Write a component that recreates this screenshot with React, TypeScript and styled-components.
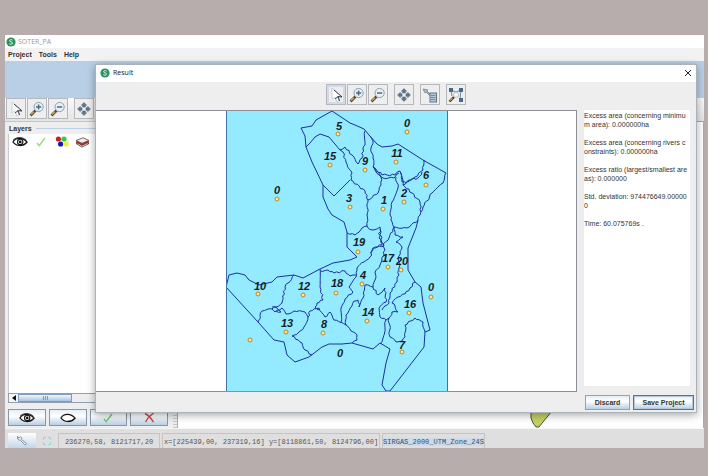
import React from "react";
import styled, { createGlobalStyle, css } from "styled-components";

const GlobalStyle = createGlobalStyle`
  * { box-sizing: border-box; }
  body {
    margin: 0;
    background: #b8adad;
    font-family: "Liberation Sans", Arial, sans-serif;
    font-size: 8px;
    color: #333;
  }
  button, textarea { font-family: inherit; font-size: inherit; color: inherit; }
`;

const steel = css`
  border: 1px solid #8797a8;
  background: linear-gradient(#e4edf6, #ffffff 40%, #b8cfe5);
`;

const Desktop = styled.div`
  display: flex;
  min-height: 100vh;
  padding: 35px 4px 28px 5px;
`;

const AppWindow = styled.div`
  position: relative;
  flex: 1;
  min-width: 0;
  display: flex;
  flex-direction: column;
  background: #eeeeee;
`;

const TitleBar = styled.header<{ $tall?: boolean }>`
  display: flex;
  align-items: center;
  gap: ${(p) => (p.$tall ? 3 : 2)}px;
  height: ${(p) => (p.$tall ? 17 : 13)}px;
  padding: ${(p) => (p.$tall ? "0 4px 2px" : "0 4px 0 1px")};
  background: #fff;
  color: ${(p) => (p.$tall ? "#111" : "#999")};
`;

const Title = styled.h1`
  flex: 1;
  margin: 0;
  font: 7px/10px "Open Sans", "Noto Sans", sans-serif;
`;

const CloseButton = styled.button`
  display: grid;
  place-items: center;
  padding: 0;
  border: 0;
  background: none;
`;

const MenuBar = styled.nav`
  display: flex;
  align-items: center;
  gap: 7px;
  height: 13px;
  padding: 0 3px;
  background: #f2f2f2;
`;

const MenuButton = styled.button`
  padding: 0;
  border: 0;
  background: none;
  font-weight: bold;
  font-size: 7px;
  line-height: 10px;
`;

const BlueStrip = styled.div`
  height: 37px;
  background: #b8cfe5;
`;

const ToolBar = styled.div<{ $center?: boolean }>`
  display: flex;
  align-items: flex-start;
  justify-content: ${(p) => (p.$center ? "center" : "flex-start")};
  gap: 6px;
  height: ${(p) => (p.$center ? 28 : 23)}px;
  padding: ${(p) => (p.$center ? "2px 0 0" : "0 1px")};
  background: ${(p) => (p.$center ? "#eeeeee" : "linear-gradient(#fafafa, #e4e4e4)")};
`;

const ToolGroup = styled.div`
  display: flex;
  gap: 1px;
`;

const ToolButton = styled.button<{ $active?: boolean }>`
  display: grid;
  place-items: center;
  width: 20px;
  height: 21px;
  padding: 0;
  border: 1px solid #b4b8bc;
  background: #eeeeee;
  box-shadow: ${(p) => (p.$active ? "inset 0 0 0 2px #cfdbe7" : "none")};
`;

const Body = styled.main`
  flex: 1;
  display: flex;
  min-height: 0;
`;

const LayerPanel = styled.section`
  display: flex;
  flex-direction: column;
  width: 168px;
  padding: 1px 5px 2px 3px;
  border-top: 1px solid #c4c4c4;
`;

const LayerHeading = styled.h2`
  display: flex;
  align-items: center;
  gap: 4px;
  margin: 0;
  padding-left: 1px;
  font-size: 7px;
  line-height: 11px;
  &::after { content: ""; flex: 1; border-top: 1px solid #b8cfe5; }
`;

const LayerList = styled.div`
  flex: 1;
  padding: 2px 0;
  background: #fff;
  border-left: 1px solid #c8ccd0;
`;

const LayerRow = styled.div`
  display: grid;
  grid-template-columns: repeat(4, 21px);
  place-items: center;
  width: 84px;
  height: 12px;
`;

const ScrollBar = styled.div`
  display: flex;
  height: 10px;
  border: 1px solid #8fa0b2;
  background: #eeeeee;
`;

const ScrollArrow = styled.button`
  display: grid;
  place-items: center;
  width: 9px;
  padding: 0;
  border: 0;
  background: #f6f6f6;
`;

const ScrollThumb = styled.div`
  display: grid;
  place-items: center;
  width: 54px;
  border: 1px solid #7a9cc0;
  background: linear-gradient(#f2f7fc, #a9c4e0);
`;

const LayerActions = styled.div`
  display: flex;
  gap: 3px;
  padding-top: 6px;
`;

const ActionButton = styled.button`
  ${steel}
  display: grid;
  place-items: center;
  flex: 1;
  height: 17px;
  padding: 0;
`;

const Splitter = styled.div`
  width: 4px;
  background: repeating-linear-gradient(#c6c6c6 0 1px, #eeeeee 1px 3px);
`;

const Canvas = styled.section`
  flex: 1;
  display: flex;
  flex-direction: column;
  justify-content: flex-end;
  align-items: flex-end;
  padding-right: 150px;
  border: 1px solid #aaa;
  border-bottom: 0;
  background: #fff;
`;

const StatusBar = styled.footer`
  display: flex;
  align-items: stretch;
  gap: 2px;
  height: 20px;
  padding: 4px 3px 0;
  border-top: 1px solid #f6f6f6;
  background: #dfdfdf;
  color: #555;
  font-family: "Liberation Mono", monospace;
  font-size: 7px;
  white-space: nowrap;
`;

const StatusTool = styled.button`
  display: grid;
  place-items: center;
  width: 28px;
  padding: 0;
  border: 0;
  background: linear-gradient(#ffffff, #c3d6e8);
`;

const StatusIcon = styled.span`
  display: grid;
  place-items: center;
  width: 18px;
`;

const StatusCell = styled.output<{ $width: number }>`
  display: flex;
  align-items: center;
  justify-content: center;
  width: ${(p) => p.$width}px;
  padding-top: 2px;
  border: 1px solid #c4c4c4;
  border-bottom: 0;
`;

const Projection = styled.span`
  background: #ccdaea;
  color: #3b4d66;
`;

const Dialog = styled.section`
  position: absolute;
  inset: 29px 7px 35px 90px;
  display: flex;
  flex-direction: column;
  border: 1px solid #aab2ba;
  background: #eeeeee;
  box-shadow: 0 2px 8px rgba(0, 0, 0, 0.35);
`;

const ResultArea = styled.div`
  flex: 1;
  min-height: 0;
  display: flex;
  gap: 7px;
  padding-right: 6px;
`;

const MapPane = styled.div`
  flex: 1;
  min-width: 0;
  display: flex;
  justify-content: center;
  padding-left: 1px;
  border: 1px solid #8c9096;
  border-left: 0;
  background: #fff;
`;

const MapSvg = styled.svg`
  display: block;
  height: 100%;
  max-width: 100%;
`;

const Report = styled.textarea`
  display: block;
  width: 106px;
  margin-bottom: 6px;
  padding: 1px 0 0;
  border: 0;
  outline: 0;
  resize: none;
  overflow: hidden;
  background: #fff;
  font-size: 7px;
  line-height: 9px;
  white-space: pre;
`;

const DialogActions = styled.div`
  display: flex;
  justify-content: flex-end;
  gap: 3px;
  height: 20px;
  padding: 3px 2px 2px;
`;

const DialogButton = styled.button<{ $primary?: boolean }>`
  ${steel}
  width: ${(p) => (p.$primary ? 61 : 45)}px;
  padding: 0;
  border-color: ${(p) => (p.$primary ? "#5f7388" : "#93a3b4")};
  box-shadow: ${(p) => (p.$primary ? "inset 0 0 0 1px #b4c8dc" : "none")};
  font-weight: bold;
  font-size: 7px;
  line-height: 10px;
`;

const Logo = () => (
  <svg width="10" height="10" viewBox="0 0 10 10" aria-hidden="true">
    <circle cx="5" cy="5" r="4.6" fill="#2f9160" />
    <path d="M6.6 3.2C5.6 2.2 3.5 2.6 3.6 3.9C3.7 5.1 6.5 4.6 6.5 6.1C6.5 7.5 4.2 7.7 3.3 6.7" fill="none" stroke="#e8fff2" strokeWidth="0.9" />
  </svg>
);

const Pointer = () => (
  <svg width="16" height="16" viewBox="0 0 16 16" aria-hidden="true">
    <path d="M4 1L4 12L7 10L9 15L11 14L9.4 9.5L14 9.5Z" fill="#fff" stroke="#b9c2ca" strokeWidth="0.7" />
    <path d="M6 3L14 10L10 9.6L11.6 14M10 9.6L7 12" fill="none" stroke="#33404c" strokeWidth="1" />
  </svg>
);

const Magnifier = ({ plus }: { plus?: boolean }) => (
  <svg width="16" height="16" viewBox="0 0 16 16" aria-hidden="true">
    <path d="M1.5 14.5L6.5 9.5" stroke="#4b463c" strokeWidth="2.6" />
    <path d="M2 13.6L5 10.8" stroke="#d9a64e" strokeWidth="1.4" />
    <circle cx="9.6" cy="6" r="4.6" fill="#e8f0f6" stroke="#8d9fae" />
    <path d={plus ? "M7 6H12.2M9.6 3.4V8.6" : "M7 6H12.2"} stroke="#4a6b87" strokeWidth="1.5" />
  </svg>
);

const Move = () => (
  <svg width="14" height="14" viewBox="0 0 14 14" fill="#5f7c94" stroke="#38536a" strokeWidth="0.5" aria-hidden="true">
    <path d="M7 0.6L9.6 3.2H8.3V5H5.7V3.2H4.4ZM7 13.4L4.4 10.8H5.7V9H8.3V10.8H9.6ZM0.6 7L3.2 4.4V5.7H5V8.3H3.2V9.6ZM13.4 7L10.8 9.6V8.3H9V5.7H10.8V4.4Z" />
  </svg>
);

const SelectList = () => (
  <svg width="16" height="16" viewBox="0 0 16 16" aria-hidden="true">
    <path d="M1 2L6 3L5 4L8.5 7.5L7.5 8.5L4 5L3 6Z" fill="#aeb8c1" stroke="#76838e" strokeWidth="0.8" />
    <rect x="8" y="6" width="6.5" height="9" fill="#b9cad8" stroke="#5c7386" />
    <path d="M9 8.5H13.5M9 10.5H13.5M9 12.5H13.5" stroke="#5f788c" strokeWidth="0.8" />
  </svg>
);

const ZoomExtent = () => (
  <svg width="16" height="16" viewBox="0 0 16 16" aria-hidden="true">
    <path d="M3 3L8 5L13 3L12 12M3 3L4 9" fill="none" stroke="#71899d" />
    <g fill="#486a86"><rect x="1" y="1" width="4" height="4" /><rect x="11" y="1" width="4" height="4" /><rect x="11" y="11" width="4" height="4" /></g>
    <path d="M1.5 14.5L6 10" stroke="#3c352a" strokeWidth="2.4" />
    <path d="M2 13.6L4.5 11.2" stroke="#d49b45" strokeWidth="1.2" />
    <circle cx="8" cy="7.8" r="2.6" fill="#f4f6f8" stroke="#b6c1ca" />
  </svg>
);

const Eye = ({ open }: { open?: boolean }) => (
  <svg width="16" height="10" viewBox="0 0 16 10" aria-hidden="true">
    <path d="M1 5C3.5 0.3 11 0 15 5.2C11 9.8 4 9.4 1 5Z" fill="#fff" stroke="#151515" strokeWidth="1.3" />
    {open && (
      <>
        <circle cx="8.2" cy="4.9" r="2.7" fill="none" stroke="#151515" strokeWidth="1.1" />
        <circle cx="8.2" cy="4.9" r="1.4" fill="#151515" />
        <path d="M1 3.2C5-0.8 11 0 14.5 3.4" fill="none" stroke="#151515" strokeWidth="0.8" />
      </>
    )}
  </svg>
);

const Tick = ({ pale }: { pale?: boolean }) => (
  <svg width="10" height="10" viewBox="0 0 10 10" aria-hidden="true">
    <path d="M1 6L3.2 8.6L9 1" fill="none" stroke={pale ? "#94dc80" : "#69ce67"} strokeWidth="1.4" />
  </svg>
);

const Cross = () => (
  <svg width="11" height="11" viewBox="0 0 11 11" aria-hidden="true">
    <path d="M1 1.5C4 3 7.5 7 9.5 10M9.5 1C6 3.5 3 7 1.5 10" fill="none" stroke="#cc4740" strokeWidth="1.4" />
  </svg>
);

const Palette = () => (
  <svg width="14" height="12" viewBox="0 0 14 12" aria-hidden="true">
    <circle cx="3.4" cy="3" r="2.6" fill="#cc1d25" />
    <circle cx="9" cy="3" r="2.6" fill="#35cc3b" />
    <circle cx="5.6" cy="8" r="2.6" fill="#1116c8" />
    <circle cx="11.2" cy="8" r="2.6" fill="#f4ee35" />
  </svg>
);

const Stack = () => (
  <svg width="15" height="11" viewBox="0 0 15 11" strokeWidth="0.8" aria-hidden="true">
    <path d="M1 6.5L7 10L14 6.5L8 4Z" fill="#fff" stroke="#333" />
    <path d="M1 5L7 8.4L14 5L8 2.5Z" fill="#bd322b" stroke="#7a211c" />
    <path d="M1 3.5L7 6.3L14 3.5L8 0.8Z" fill="#f5eee8" stroke="#5c4440" />
  </svg>
);

const Wrench = () => (
  <svg width="12" height="11" viewBox="0 0 12 11" aria-hidden="true">
    <path d="M1.5 1.5L3 3.2L4.4 1.7C5.8 2.2 6 3.6 5.4 4.4L10.2 8.2C10.6 9.4 9.6 10 8.7 9.5L4.3 5.2C2.6 5.6 1.2 4 1.5 1.5Z" fill="#f5f7f9" stroke="#697682" strokeWidth="0.8" />
  </svg>
);

type Pt = [number, number];

const parse = (s: string): Pt[] => s.split(" ").map((p) => p.split(",").map(Number) as Pt);

const smoothLine = (s: string) => "M" + parse(s).map((p) => p.join(" ")).join("L");

/* Splits each segment into short steps with a repeatable sideways wobble, like a digitised river. */
const riverLine = (s: string) => {
  const pts = parse(s);
  const out: Pt[] = [pts[0]];
  for (let i = 1; i < pts.length; i++) {
    const [x0, y0] = pts[i - 1];
    const [x1, y1] = pts[i];
    const len = Math.hypot(x1 - x0, y1 - y0) || 1;
    const steps = Math.max(1, Math.round(len / 2.5));
    for (let k = 1; k < steps; k++) {
      const t = k / steps;
      const x = x0 + (x1 - x0) * t;
      const y = y0 + (y1 - y0) * t;
      const w = Math.sin(x * 12.9 + y * 78.2) * 0.9;
      out.push([x - ((y1 - y0) / len) * w, y + ((x1 - x0) / len) * w]);
    }
    out.push([x1, y1]);
  }
  return "M" + out.map(([x, y]) => `${x.toFixed(1)} ${y.toFixed(1)}`).join("L");
};

const borders = [
  "332,111 350,123 355,125 364,129 369,135 377,144 382,147 392,146 398,144 423,160 446,173",
  "332,111 316,120 312,126 301,128 305,136 306,147 312,162 323,185 323,197 328,209 332,215 344,222 347,232 347,247 357,257 350,260 333,263 320,269 303,278 294,275 277,277 272,282 259,285 249,280 245,275 237,273 229,275 226,287",
  "226,287 258,322 274,340 284,342 287,355 295,362 309,357 322,347 329,344 342,344 352,343 373,349 380,343 390,349 386,363 382,385 386,391 390,391 424,347 425,332 430,330 423,303 421,287 415,282 408,270 408,248 416,228 418,220",
  "306,147 310,143 315,137 320,134 329,137 340,150",
  "350,180 343,187 334,196 323,185",
];

const rivers = [
  "340,150 345,147 352,155 358,164 362,158 363,149 365,145 365,131",
  "340,150 343,152 346,162 352,173 351,180 365,191 368,200 378,193 381,185 381,177 373,167 373,158 371,148 373,141 369,135",
  "373,167 382,175 395,175 400,171 403,185 415,177 423,170 424,160",
  "374,168 383,178 394,178 399,173",
  "401,173 402,182 406,183 409,180 418,178 422,172",
  "368,200 367,215 367,226",
  "396,177 398,188 392,202 390,215 391,220 394,227 389,238 383,246",
  "403,185 412,193 420,202 421,212",
  "446,173 443,183 432,193 423,207 420,215 418,220 407,228 394,227",
  "347,233 355,235 362,228 367,226 372,230 380,227 382,245 373,248 370,257 364,262 357,268 356,277 349,287 353,292 345,299 341,308 341,322 346,325",
  "380,229 379,238 384,246 375,247 371,253",
  "320,271 328,270 334,273 345,271 350,276 356,275",
  "320,269 320,287 323,300 317,303 315,307 319,310",
  "294,275 288,283 285,287 282,303 272,309 262,311 258,322",
  "272,309 275,312 282,308 286,314 294,311 305,312 308,317 304,327 298,333 292,336 302,343 305,350 312,355",
  "272,307 277,308 281,312 276,311",
  "308,317 310,311 319,308 325,317 330,312 334,320 341,323",
  "383,246 385,250 380,265 375,273 375,280 373,287 378,295 385,288 386,302 379,308 380,317 386,320 383,338 380,344",
  "373,287 365,285 363,298 359,307 358,300 354,301 352,306 346,315 346,325 351,331 357,335 357,340 352,343",
  "394,227 395,235 403,237 396,242 402,247 399,256 399,268 397,282 390,293 389,303 382,310",
  "415,282 410,288 405,294 398,297 392,303 395,306 398,312 392,312 389,318 386,320",
  "389,318 390,337 396,342 402,341 405,337 405,325 415,318 423,322 425,332",
];

const labels: [string, number, number][] = [
  ["5", 339, 130], ["0", 407, 127], ["15", 330, 160], ["9", 365, 165], ["11", 397, 157],
  ["6", 426, 179], ["0", 277, 194], ["3", 349, 202], ["1", 384, 204], ["2", 404, 197],
  ["19", 359, 246], ["17", 388, 262], ["20", 402, 265], ["4", 363, 279], ["10", 260, 290],
  ["12", 304, 290], ["18", 337, 287], ["0", 431, 291], ["16", 410, 308], ["14", 368, 316],
  ["13", 287, 327], ["8", 324, 328], ["7", 402, 349], ["0", 340, 357],
];

const sites = parse(
  "338,134 407,132 330,165 365,170 396,162 426,185 277,199 350,207 383,209 404,202 358,252 388,267 401,270 362,284 258,294 303,295 336,293 431,297 409,313 367,321 286,332 323,333 402,352 250,340"
);

const DistrictMap = () => (
  <MapSvg viewBox="226 111 222 280" role="img" aria-label="Partition map">
    <rect x="226" y="111" width="222" height="280" fill="#94ebff" />
    <g fill="none" stroke="#1b2fa0" strokeWidth="1" strokeLinejoin="round">
      {borders.map((b) => <path key={b} d={smoothLine(b)} />)}
      {rivers.map((r) => <path key={r} d={riverLine(r)} />)}
      <path d="M226.5 111V391M447.5 111V391" stroke="#4470a8" />
    </g>
    <g fill="#ffe98a" stroke="#b8862c" strokeWidth="1">
      {sites.map(([x, y]) => <circle key={`${x}-${y}`} cx={x} cy={y} r="2" />)}
    </g>
    <g fill="#141c28" fontFamily="Liberation Sans, Arial, sans-serif" fontSize="11" fontWeight="bold" fontStyle="italic" textAnchor="middle">
      {labels.map(([t, x, y]) => <text key={`${t}-${x}`} x={x} y={y}>{t}</text>)}
    </g>
  </MapSvg>
);

const NavigationTools = ({ active }: { active?: boolean }) => (
  <>
    <ToolGroup>
      <ToolButton $active={active} aria-label="Select"><Pointer /></ToolButton>
      <ToolButton aria-label="Zoom in"><Magnifier plus /></ToolButton>
      <ToolButton aria-label="Zoom out"><Magnifier /></ToolButton>
    </ToolGroup>
    <ToolButton aria-label="Pan"><Move /></ToolButton>
  </>
);

const report = `Excess area (concerning minimu
m area): 0.000000ha

Excess area (concerning rivers c
onstraints): 0.000000ha

Excess ratio (largest/smallest are
as): 0.000000

Std. deviation: 974476649.00000
0

Time: 60.075769s .`;

export default function App() {
  return (
    <Desktop>
      <GlobalStyle />
      <AppWindow>
        <TitleBar>
          <Logo />
          <Title>SOTER_PA</Title>
        </TitleBar>
        <MenuBar>
          <MenuButton>Project</MenuButton>
          <MenuButton>Tools</MenuButton>
          <MenuButton>Help</MenuButton>
        </MenuBar>
        <BlueStrip />
        <ToolBar>
          <NavigationTools />
        </ToolBar>
        <Body>
          <LayerPanel>
            <LayerHeading>Layers</LayerHeading>
            <LayerList>
              <LayerRow>
                <Eye open />
                <Tick pale />
                <Palette />
                <Stack />
              </LayerRow>
            </LayerList>
            <ScrollBar>
              <ScrollArrow aria-label="Scroll left">
                <svg width="4" height="6" viewBox="0 0 4 6" aria-hidden="true"><path d="M4 0V6L0 3Z" fill="#111" /></svg>
              </ScrollArrow>
              <ScrollThumb>
                <svg width="5" height="4" viewBox="0 0 5 4" aria-hidden="true"><path d="M0.5 0V4M2.5 0V4M4.5 0V4" stroke="#7d9dbf" /></svg>
              </ScrollThumb>
            </ScrollBar>
            <LayerActions>
              <ActionButton aria-label="Show all"><Eye open /></ActionButton>
              <ActionButton aria-label="Hide all"><Eye /></ActionButton>
              <ActionButton aria-label="Select all"><Tick /></ActionButton>
              <ActionButton aria-label="Remove"><Cross /></ActionButton>
            </LayerActions>
          </LayerPanel>
          <Splitter />
          <Canvas>
            <svg width="24" height="30" viewBox="0 0 24 30" aria-hidden="true">
              <path d="M4 6L2 14L2 20L4 25L7 29H10L14 24L23 13L22 4Z" fill="#c4cf66" stroke="#4c5530" />
            </svg>
          </Canvas>
        </Body>
        <StatusBar>
          <StatusTool aria-label="Settings"><Wrench /></StatusTool>
          <StatusIcon>
            <svg width="8" height="8" viewBox="0 0 8 8" aria-hidden="true"><path d="M0.5 3V0.5H3M5 0.5H7.5V3M7.5 5V7.5H5M3 7.5H0.5V5" fill="none" stroke="#8bdcd8" /></svg>
          </StatusIcon>
          <StatusCell $width={102}>236270,58, 8121717,20</StatusCell>
          <StatusCell $width={218}>x=[225439,00, 237319,16] y=[8118861,50, 8124796,00]</StatusCell>
          <StatusCell $width={103}><Projection>SIRGAS_2000_UTM_Zone_24S</Projection></StatusCell>
        </StatusBar>
        <Dialog role="dialog" aria-label="Result">
          <TitleBar $tall>
            <Logo />
            <Title as="h2">Result</Title>
            <CloseButton aria-label="Close">
              <svg width="8" height="8" viewBox="0 0 8 8" aria-hidden="true"><path d="M1 1L7 7M7 1L1 7" stroke="#222" /></svg>
            </CloseButton>
          </TitleBar>
          <ToolBar $center>
            <NavigationTools active />
            <ToolButton aria-label="Select from list"><SelectList /></ToolButton>
            <ToolButton aria-label="Zoom to extent"><ZoomExtent /></ToolButton>
          </ToolBar>
          <ResultArea>
            <MapPane><DistrictMap /></MapPane>
            <Report readOnly aria-label="Result report" value={report} />
          </ResultArea>
          <DialogActions>
            <DialogButton>Discard</DialogButton>
            <DialogButton $primary>Save Project</DialogButton>
          </DialogActions>
        </Dialog>
      </AppWindow>
    </Desktop>
  );
}
